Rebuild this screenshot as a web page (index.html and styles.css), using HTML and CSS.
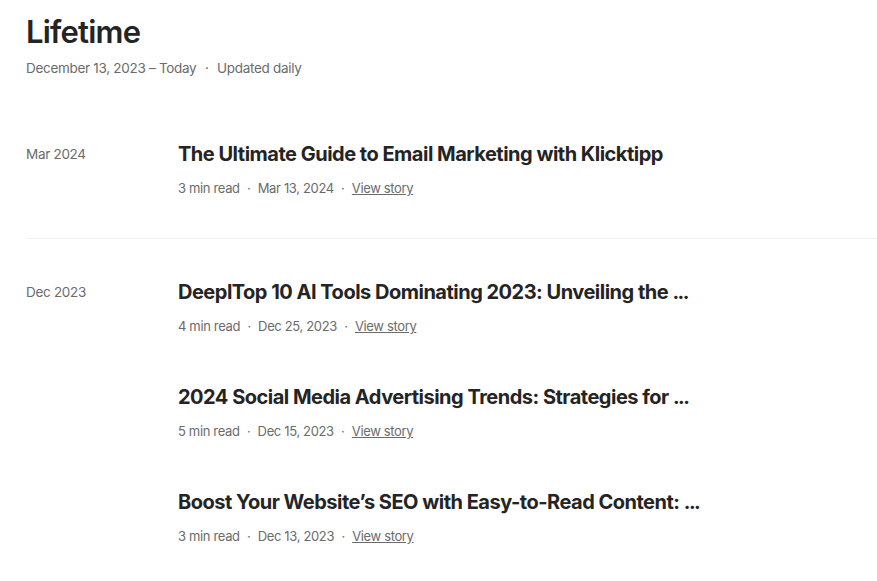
FILE: index.html
```html
<!DOCTYPE html>
<html lang="en">
<head>
    <meta charset="UTF-8">
    <meta name="viewport" content="width=device-width, initial-scale=1.0">
    <title>Lifetime stats</title>
    <link rel="stylesheet" href="styles.css">
</head>
<body>
    <div class="page">
        <h1 class="page-title">Lifetime</h1>
        <p class="page-sub">December 13, 2023 – Today <span class="dot">·</span> Updated daily</p>

        <div class="month">
            <div class="month-label">Mar 2024</div>
            <div class="stories">
                <div class="story">
                    <h2 class="story-title">The Ultimate Guide to Email Marketing with Klicktipp</h2>
                    <div class="story-meta">3 min read <span class="dot">·</span> Mar 13, 2024 <span class="dot">·</span> <a href="#">View story</a></div>
                </div>
            </div>
        </div>

        <div class="month">
            <div class="month-label">Dec 2023</div>
            <div class="stories">
                <div class="story">
                    <h2 class="story-title">DeeplTop 10 AI Tools Dominating 2023: Unveiling the <span class="more">...</span></h2>
                    <div class="story-meta">4 min read <span class="dot">·</span> Dec 25, 2023 <span class="dot">·</span> <a href="#">View story</a></div>
                </div>
                <div class="story">
                    <h2 class="story-title">2024 Social Media Advertising Trends: Strategies for <span class="more">...</span></h2>
                    <div class="story-meta">5 min read <span class="dot">·</span> Dec 15, 2023 <span class="dot">·</span> <a href="#">View story</a></div>
                </div>
                <div class="story">
                    <h2 class="story-title">Boost Your Website’s SEO with Easy-to-Read Content: <span class="more">...</span></h2>
                    <div class="story-meta">3 min read <span class="dot">·</span> Dec 13, 2023 <span class="dot">·</span> <a href="#">View story</a></div>
                </div>
            </div>
        </div>
    </div>
</body>
</html>
```

FILE: styles.css
```css
body {
    margin: 0;
    font-family: Inter, "Noto Sans", sans-serif;
    color: #242424;
    background: #fff;
}

.page {
    padding: 14px 0 0 26px;
}

.page-title {
    margin: 0;
    font-size: 31px;
    font-weight: 600;
    letter-spacing: -0.8px;
    line-height: 36px;
}

.page-sub {
    margin: 8px 0 0;
    font-size: 13.5px;
    line-height: 20px;
    color: #6b6b6b;
    letter-spacing: -0.3px;
}

.page-sub .dot {
    margin: 0 5px;
}

.month {
    display: flex;
    padding: 65px 0 40px;
}

.month + .month {
    border-top: 1px solid #f2f2f2;
    padding-top: 42px;
}

.month-label {
    width: 152px;
    flex-shrink: 0;
    font-size: 13.5px;
    line-height: 22px;
    color: #6b6b6b;
    letter-spacing: -0.3px;
}

.stories {
    display: flex;
    flex-direction: column;
    gap: 50px;
}

.story-title {
    margin: 0;
    font-size: 20px;
    font-weight: 700;
    line-height: 22px;
    letter-spacing: -0.5px;
}

.story-title .more {
    letter-spacing: -1.5px;
}

.story-meta {
    margin-top: 13px;
    font-size: 13px;
    line-height: 20px;
    color: #6b6b6b;
    letter-spacing: -0.35px;
}

.story-meta .dot {
    margin: 0 4px;
}

.story-meta a {
    color: #6b6b6b;
    text-decoration: underline;
}
```
